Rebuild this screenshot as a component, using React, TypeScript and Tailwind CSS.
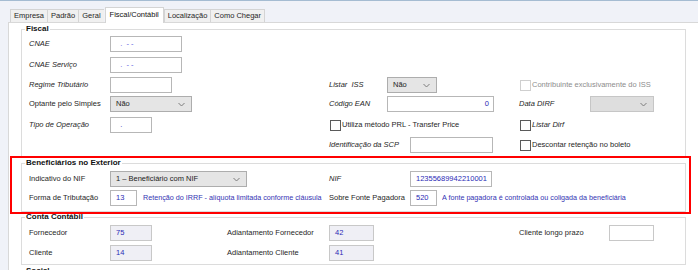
import React from "react";

function Field({ className, children }: { className: string; children?: React.ReactNode }) {
  return (
    <div className={`h-[16px] border border-[#b7b7b7] flex items-center px-[5px] text-[#2b2bb5] whitespace-pre ${className}`}>
      {children}
    </div>
  );
}

function Select({ className, value }: { className: string; value?: string }) {
  return (
    <div className={`h-[16px] border flex items-center justify-between pl-[5px] pr-[6px] text-[#222] ${className}`}>
      <span>{value}</span>
      <svg width="7" height="5" viewBox="0 0 7 5">
        <polyline points="0.5,1 3.5,4 6.5,1" fill="none" stroke="#7d7d7d" strokeWidth="1" />
      </svg>
    </div>
  );
}

function Check({ label, italic, disabled }: { label: string; italic?: boolean; disabled?: boolean }) {
  return (
    <div className="flex items-center pl-[1px]">
      <span className={`w-[11px] h-[11px] border bg-white ${disabled ? "border-[#cfcfcf]" : "border-[#5a5a5a]"}`} />
      <span className={`ml-[1px] ${italic ? "italic" : ""} ${disabled ? "text-[#8d8d8d]" : ""}`}>{label}</span>
    </div>
  );
}

function Group({ title, className, children }: { title: string; className: string; children?: React.ReactNode }) {
  return (
    <fieldset className={`ml-[12px] w-[665px] border border-[#dcdcdc] ${className}`}>
      <legend className="ml-[3px] px-[1px] font-bold text-[8px] leading-[10px] text-[#111]">{title}</legend>
      <div className="ml-[7px] flex flex-col">{children}</div>
    </fieldset>
  );
}

const row = "grid grid-cols-[81px_219px_190px_1fr] items-center h-[16px]";

export default function App() {
  const tabs = ["Empresa", "Padrão", "Geral", "Fiscal/Contábil", "Localização", "Como Chegar"];
  return (
    <div className="relative w-[698px] h-[270px] overflow-hidden bg-white font-['Liberation_Sans',Arial,sans-serif] text-[7.5px] text-[#262626]">
      <div className="h-px bg-[#a5bcd2]" />
      <div className="h-[21px] bg-[#f0f2f8] flex items-end pl-[10px]">
        {tabs.map((t) =>
          t === "Fiscal/Contábil" ? (
            <div
              key={t}
              className="relative z-10 -mb-px ml-[1px] h-[16px] px-[4px] pb-[2px] flex items-center bg-white border border-b-0 border-[#d4d4d4] text-[#111]"
            >
              {t}
            </div>
          ) : (
            <div
              key={t}
              className="h-[13px] px-[3px] flex items-center bg-[#f0f0f0] border border-r-0 border-b-0 border-[#d4d4d4] last:border-r"
            >
              {t}
            </div>
          )
        )}
      </div>
      <div className="flex h-[248px]">
        <div className="w-[9px] bg-[#f0f2f8] border-r border-[#d8d8d8]" />
        <div className="flex-1 bg-white border-t border-[#d8d8d8] flex flex-col">
          <Group title="Fiscal" className="mt-[1px] pb-[3px]">
            <div className={`${row} mt-[2px]`}>
              <span className="italic">CNAE</span>
              <Field className="w-[72px] bg-white text-[#5a5ae0]">{"  .  - -"}</Field>
            </div>
            <div className={`${row} mt-[5px]`}>
              <span className="italic">CNAE Serviço</span>
              <Field className="w-[72px] bg-white text-[#5a5ae0]">{"  .  - -"}</Field>
            </div>
            <div className={`${row} mt-[4px]`}>
              <span className="italic">Regime Tributário</span>
              <Field className="w-[62px] bg-white" />
              <div className="flex items-center">
                <span className="w-[58px] italic">Listar&nbsp;&nbsp;ISS</span>
                <Select className="w-[50px] bg-[#e5e5e5] border-[#adadad]" value="Não" />
              </div>
              <Check label="Contribuinte exclusivamente do ISS" disabled />
            </div>
            <div className={`${row} mt-[3px]`}>
              <span>Optante pelo Simples</span>
              <Select className="w-[82px] bg-[#e5e5e5] border-[#adadad]" value="Não" />
              <div className="flex items-center">
                <span className="w-[58px] italic">Código EAN</span>
                <Field className="w-[107px] bg-white justify-end pr-[4px]">0</Field>
              </div>
              <div className="flex items-center">
                <span className="w-[71px] italic">Data DIRF</span>
                <Select className="w-[64px] bg-[#dedede] border-[#c6c6c6]" />
              </div>
            </div>
            <div className={`${row} mt-[5px]`}>
              <span className="italic">Tipo de Operação</span>
              <Field className="w-[42px] bg-white">{"  ."}</Field>
              <Check label="Utiliza método PRL - Transfer Price" />
              <Check label="Listar Dirf" italic />
            </div>
            <div className={`${row} mt-[4px]`}>
              <span />
              <span />
              <div className="flex items-center">
                <span className="w-[81px] italic">Identificação da SCP</span>
                <Field className="w-[83px] bg-white" />
              </div>
              <Check label="Descontar retenção no boleto" />
            </div>
          </Group>

          <Group title="Beneficiários no Exterior" className="mt-[1px] pb-[5px]">
            <div className={`${row} mt-[3px]`}>
              <span>Indicativo do NIF</span>
              <Select className="w-[137px] bg-[#e5e5e5] border-[#adadad]" value="1 – Beneficiário com NIF" />
              <div className="col-span-2 flex items-center">
                <span className="w-[81px] italic">NIF</span>
                <Field className="w-[82px] bg-white">12355689942210001</Field>
              </div>
            </div>
            <div className={`${row} mt-[3px]`}>
              <span>Forma de Tributação</span>
              <div className="flex items-center">
                <Field className="w-[27px] bg-white">13</Field>
                <span className="ml-[6px] whitespace-nowrap text-[7.2px] text-[#3333b3]">
                  Retenção do IRRF - alíquota limitada conforme cláusula
                </span>
              </div>
              <div className="col-span-2 flex items-center">
                <span className="w-[81px]">Sobre Fonte Pagadora</span>
                <Field className="w-[27px] bg-white">520</Field>
                <span className="ml-[5px] w-[184px] overflow-hidden whitespace-nowrap text-[7.2px] text-[#3333b3]">
                  A fonte pagadora é controlada ou coligada da beneficiária
                </span>
              </div>
            </div>
          </Group>

          <Group title="Conta Contábil" className="pb-[3px]">
            <div className={`${row} mt-[3px]`}>
              <span>Fornecedor</span>
              <div className="grid grid-cols-[117px_102px] items-center">
                <Field className="w-[42px] bg-[#efeff5] border-[#c8c8c8]">75</Field>
                <span>Adiantamento Fornecedor</span>
              </div>
              <Field className="w-[45px] bg-[#efeff5] border-[#c8c8c8]">42</Field>
              <div className="flex items-center">
                <span className="w-[90px]">Cliente longo prazo</span>
                <Field className="w-[45px] bg-white border-[#c8c8c8]" />
              </div>
            </div>
            <div className={`${row} mt-[4px]`}>
              <span>Cliente</span>
              <div className="grid grid-cols-[117px_102px] items-center">
                <Field className="w-[42px] bg-[#efeff5] border-[#c8c8c8]">14</Field>
                <span>Adiantamento Cliente</span>
              </div>
              <Field className="w-[45px] bg-[#efeff5] border-[#c8c8c8]">41</Field>
            </div>
          </Group>

          <Group title="Social" className="mt-[1px] pb-[20px]" />
        </div>
      </div>
      <div className="absolute left-[10px] top-[156px] w-[681px] h-[58px] border-2 border-[#ff0000]" />
    </div>
  );
}
